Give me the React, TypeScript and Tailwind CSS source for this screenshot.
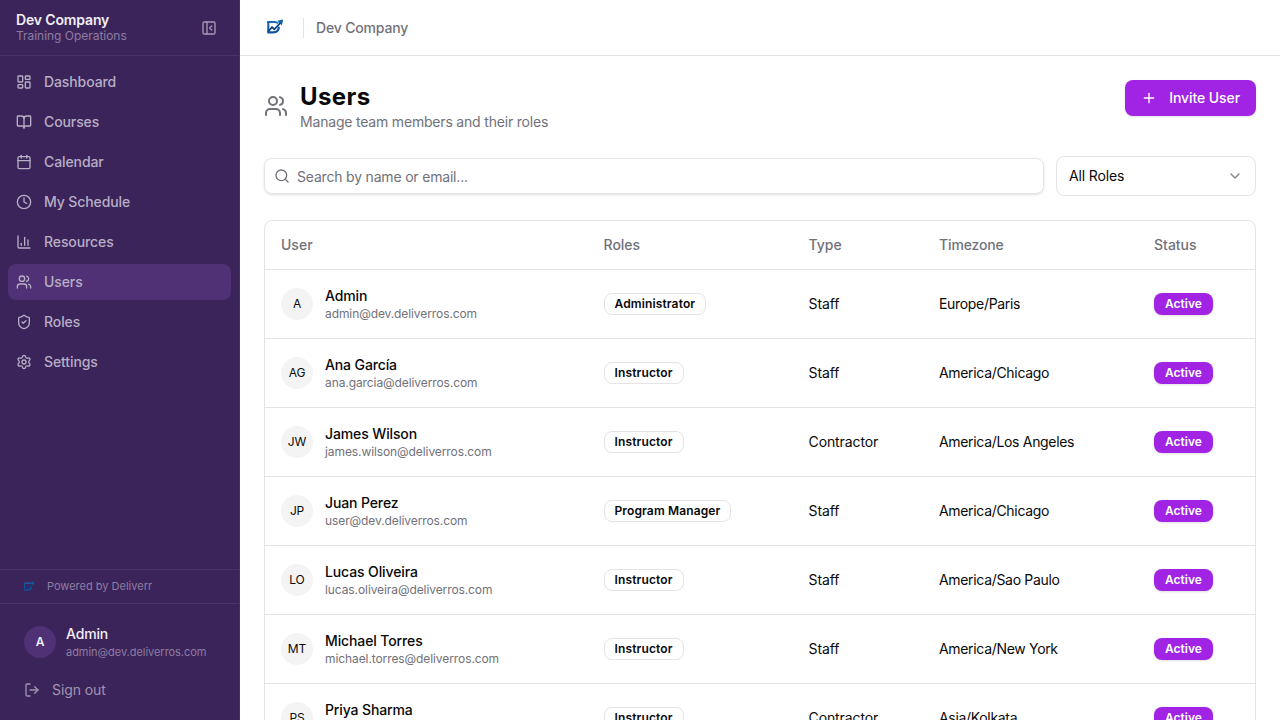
import type { LucideIcon } from "lucide-react";
import {
  BookOpen,
  Calendar,
  ChartColumn,
  ChevronDown,
  Clock,
  LayoutDashboard,
  LogOut,
  PanelLeftClose,
  Plus,
  Search,
  Settings,
  ShieldCheck,
  Users,
} from "lucide-react";

type NavItem = { title: string; icon: LucideIcon; active?: boolean };

const navItems: NavItem[] = [
  { title: "Dashboard", icon: LayoutDashboard },
  { title: "Courses", icon: BookOpen },
  { title: "Calendar", icon: Calendar },
  { title: "My Schedule", icon: Clock },
  { title: "Resources", icon: ChartColumn },
  { title: "Users", icon: Users, active: true },
  { title: "Roles", icon: ShieldCheck },
  { title: "Settings", icon: Settings },
];

const users = [
  { initials: "A", name: "Admin", email: "admin@dev.deliverros.com", role: "Administrator", type: "Staff", timezone: "Europe/Paris" },
  { initials: "AG", name: "Ana García", email: "ana.garcia@deliverros.com", role: "Instructor", type: "Staff", timezone: "America/Chicago" },
  { initials: "JW", name: "James Wilson", email: "james.wilson@deliverros.com", role: "Instructor", type: "Contractor", timezone: "America/Los Angeles" },
  { initials: "JP", name: "Juan Perez", email: "user@dev.deliverros.com", role: "Program Manager", type: "Staff", timezone: "America/Chicago" },
  { initials: "LO", name: "Lucas Oliveira", email: "lucas.oliveira@deliverros.com", role: "Instructor", type: "Staff", timezone: "America/Sao Paulo" },
  { initials: "MT", name: "Michael Torres", email: "michael.torres@deliverros.com", role: "Instructor", type: "Staff", timezone: "America/New York" },
  { initials: "PS", name: "Priya Sharma", email: "priya.sharma@deliverros.com", role: "Instructor", type: "Contractor", timezone: "Asia/Kolkata" },
];

const Logo = ({ className }: { className?: string }) => (
  <svg viewBox="0 0 18 16" fill="none" className={className}>
    <path d="M1.2 3h7.4c1.6 0 2.7.5 3.4 1.3" stroke="#1a6cb5" strokeWidth="2" />
    <path d="M2.3 3v10" stroke="#1259a3" strokeWidth="2" />
    <path d="M1.3 13.4h5.9c3.5 0 5.5-2 5.7-5.6" stroke="#11559e" strokeWidth="2.2" />
    <path d="M2 12.6 6 8.2l2.4 2.1 6.2-6.6" stroke="#0b4384" strokeWidth="1.8" />
    <path d="M11.4 1.8 17.2.6l-1.3 5.8z" fill="#0f5ea8" />
  </svg>
);

const Sidebar = () => (
  <aside className="flex h-full w-60 shrink-0 flex-col border-r border-[#4a2f6e] bg-[#3b245a] text-[#b8aec5]">
    <div className="flex h-14 shrink-0 items-center justify-between border-b border-[#4a3169] pl-4 pr-4">
      <div>
        <p className="text-sm leading-4 font-semibold tracking-[-0.15px] text-[#f1eef5]">Dev Company</p>
        <p className="text-xs leading-4 tracking-[-0.03px] text-[#8d7da2]">Training Operations</p>
      </div>
      <button className="flex size-7 items-center justify-center text-[#a79bb6]">
        <PanelLeftClose size={16} />
      </button>
    </div>

    <nav className="flex flex-1 flex-col gap-1 p-2">
      {navItems.map(({ title, icon: Icon, active }) => (
        <a
          key={title}
          className={`flex h-9 items-center gap-3 rounded-lg px-2 text-sm font-medium tracking-[-0.1px] ${active ? "bg-[#503175]" : ""}`}
        >
          <Icon size={16} />
          {title}
        </a>
      ))}
    </nav>

    <div className="flex h-[34px] shrink-0 items-center border-t border-[#4a3169] pl-[23px] text-[11px] text-[#8d7da2]">
      <Logo className="mr-3 h-[11px] w-3 opacity-90" />
      Powered by Deliverr
    </div>

    <div className="h-[117px] shrink-0 border-t border-[#4a3169] px-6 pt-[21px]">
      <div className="flex items-start gap-2.5">
        <div className="mt-px flex size-8 items-center justify-center rounded-full bg-[#503175] text-xs font-semibold text-[#f1eef5]">
          A
        </div>
        <div>
          <p className="text-sm leading-[18px] font-medium tracking-[-0.15px] text-[#f1eef5]">Admin</p>
          <p className="text-[11px] leading-[18px] tracking-[-0.04px] text-[#8d7da2]">admin@dev.deliverros.com</p>
        </div>
      </div>
      <button className="mt-[19px] flex items-center gap-3 text-sm tracking-[-0.1px] text-[#a094b1]">
        <LogOut size={16} />
        Sign out
      </button>
    </div>
  </aside>
);

const UsersTable = () => (
  <div className="mt-6 rounded-lg border border-[#e4e4e7]">
    <table className="w-full table-fixed text-left text-sm">
      <colgroup>
        <col className="w-[322.5px]" />
        <col className="w-[205px]" />
        <col className="w-[130.5px]" />
        <col className="w-[215px]" />
        <col />
      </colgroup>
      <thead>
        <tr className="h-12 border-b border-[#e4e4e7] text-[#71717a]">
          <th className="px-4 font-medium">User</th>
          <th className="px-4 font-medium">Roles</th>
          <th className="px-4 font-medium">Type</th>
          <th className="px-4 font-medium tracking-[-0.14px]">Timezone</th>
          <th className="px-4 font-medium">Status</th>
        </tr>
      </thead>
      <tbody>
        {users.map((user) => (
          <tr key={user.email} className="h-[69px] border-b border-[#e4e4e7]">
            <td className="px-4">
              <div className="flex items-center gap-3">
                <div className="flex size-8 items-center justify-center rounded-full bg-[#f4f4f5] text-xs tracking-[-0.15px]">
                  {user.initials}
                </div>
                <div>
                  <p className="leading-5 font-medium tracking-[-0.12px]">{user.name}</p>
                  <p className="text-xs leading-4 tracking-[-0.09px] text-[#71717a]">{user.email}</p>
                </div>
              </div>
            </td>
            <td className="px-4">
              <span className="inline-flex rounded-lg border border-[#e4e4e7] px-2.5 py-0.5 text-xs font-semibold tracking-[0.13px]">
                {user.role}
              </span>
            </td>
            <td className="px-4 tracking-[-0.1px]">{user.type}</td>
            <td className="px-4 tracking-[-0.32px]">{user.timezone}</td>
            <td className="px-4">
              <span className="inline-flex rounded-lg border border-transparent bg-[#a124e4] px-2.5 py-0.5 text-xs font-semibold text-white shadow-sm">
                Active
              </span>
            </td>
          </tr>
        ))}
      </tbody>
    </table>
  </div>
);

const App = () => {
  return (
    <div className="flex h-screen overflow-hidden bg-white font-['Inter',sans-serif] text-[#09090b] antialiased">
      <Sidebar />
      <div className="flex min-w-0 flex-1 flex-col">
        <header className="flex h-14 shrink-0 items-center border-b border-[#e4e4e7] pl-[26px]">
          <Logo className="-mt-px h-4 w-[18px]" />
          <div className="ml-[19px] h-5 w-px bg-[#e4e4e7]" />
          <span className="ml-3 text-sm font-medium tracking-[-0.17px] text-[#71717a]">Dev Company</span>
        </header>

        <main className="min-h-0 flex-1 overflow-hidden p-6">
          <div className="flex items-start justify-between">
            <div className="flex items-center gap-3">
              <Users size={24} className="text-[#71717a]" />
              <div className="py-px">
                <h1 className="text-2xl leading-8 font-bold tracking-[0.4px]">Users</h1>
                <p className="text-sm leading-[18px] tracking-[-0.19px] text-[#71717a]">
                  Manage team members and their roles
                </p>
              </div>
            </div>
            <button className="flex h-9 items-center gap-3 rounded-lg bg-[#a124e4] px-4 text-sm font-medium tracking-[-0.08px] text-white shadow-sm">
              <Plus size={16} />
              Invite User
            </button>
          </div>

          <div className="mt-6 flex items-center gap-3">
            <div className="flex h-9 flex-1 items-center gap-[7px] rounded-lg border border-[#e4e4e7] px-[9px] text-sm tracking-[-0.19px] text-[#71717a] shadow-sm">
              <Search size={16} />
              <span className="pt-0.5">Search by name or email...</span>
            </div>
            <button className="flex h-10 w-[200px] items-center justify-between rounded-lg border border-[#e4e4e7] px-3 text-sm tracking-[-0.15px]">
              All Roles
              <ChevronDown size={16} className="opacity-50" />
            </button>
          </div>

          <UsersTable />
        </main>
      </div>
    </div>
  );
};

export default App;
